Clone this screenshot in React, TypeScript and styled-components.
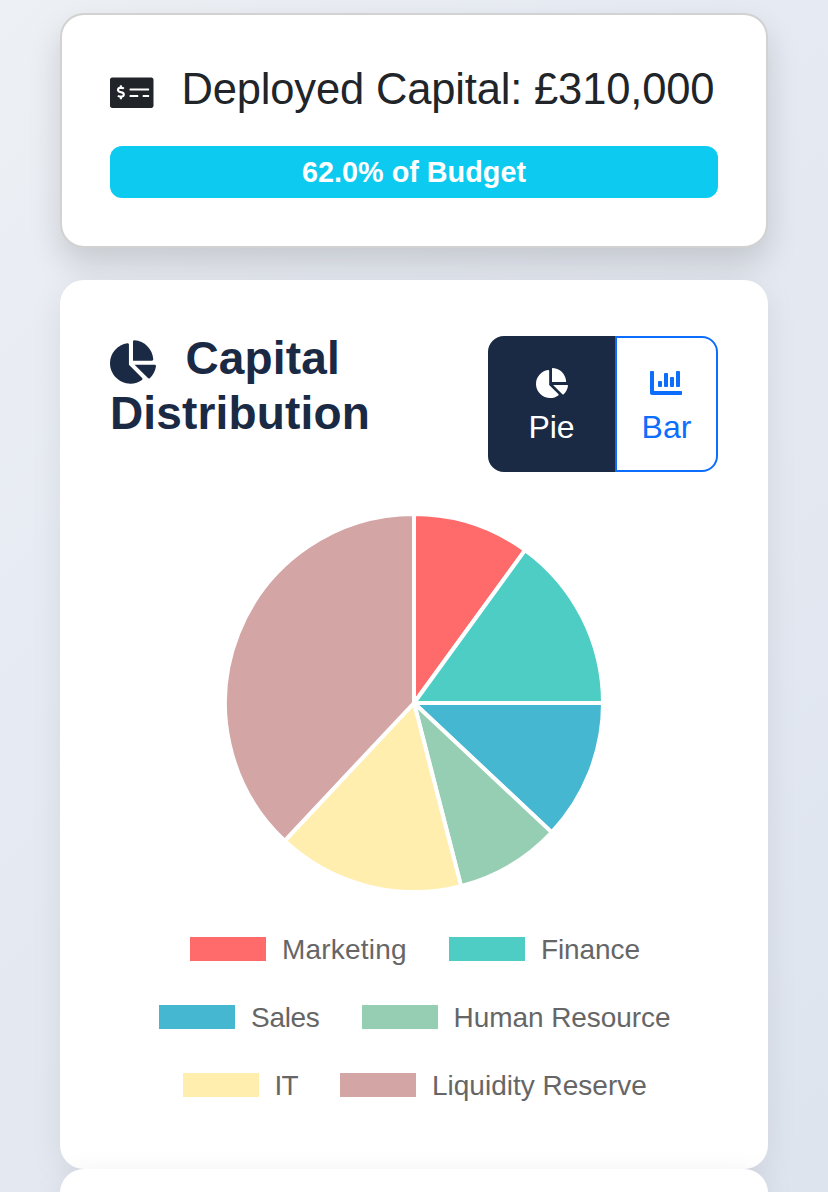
import React from 'react';
import styled, { createGlobalStyle } from 'styled-components';
import { FaMoneyCheckAlt, FaChartPie, FaChartBar } from 'react-icons/fa';

const GlobalStyle = createGlobalStyle`
  *, *::before, *::after { box-sizing: border-box; }
  body {
    margin: 0;
    height: 1192px;
    overflow: hidden;
    font-family: "Liberation Sans", Arial, sans-serif;
    color: #212529;
    background: linear-gradient(135deg, #edf0f4 0%, #e7ebf3 30%, #dee4ee 100%);
  }
`;

const Page = styled.main`
  display: flex;
  flex-direction: column;
  height: 1192px;
  padding: 13px 60px 0;
  overflow: hidden;
`;

const SummaryCard = styled.section`
  flex: none;
  height: 235px;
  margin-bottom: 32px;
  padding: 48px 48px 0;
  background: #fff;
  border: 2px solid rgba(0, 0, 0, 0.175);
  border-radius: 24px;
  box-shadow: 0 16px 32px rgba(0, 0, 0, 0.15);
`;

const SummaryTitle = styled.h2`
  display: flex;
  align-items: center;
  height: 52px;
  margin: 0 0 31px;
  font-size: 43.5px;
  font-weight: 400;
  line-height: 52px;
  letter-spacing: -0.16px;
  white-space: nowrap;

  svg {
    flex: none;
    margin: 8px 28px 0 0;
  }
`;

const ProgressBar = styled.div`
  display: flex;
  align-items: center;
  justify-content: center;
  height: 52px;
  border-radius: 12px;
  background: #0dcaf0;
  color: #fff;
  font-size: 28.8px;
  font-weight: 700;
`;

const ChartCard = styled.section`
  flex: none;
  height: 889px;
  padding: 50px 50px 0;
  background: #fff;
  border-radius: 24px;
  box-shadow: 0 8px 32px rgba(0, 0, 0, 0.08);
`;

const ChartHeader = styled.header`
  display: flex;
  justify-content: space-between;
  align-items: flex-start;
`;

const ChartTitle = styled.h3`
  margin: 1px 0 0;
  color: #1b2a44;
  font-size: 46px;
  font-weight: 700;
  line-height: 55px;
  letter-spacing: 0.15px;

  svg {
    margin-right: 29.5px;
    vertical-align: -11px;
  }
`;

const ToggleGroup = styled.div`
  display: flex;
  width: 230px;
  height: 136px;
  margin-top: 6px;
`;

const ToggleButton = styled.button<{ $active?: boolean }>`
  display: flex;
  flex-direction: column;
  align-items: center;
  width: ${p => (p.$active ? '127px' : '103px')};
  padding: 29px 0 0;
  border: 2px solid ${p => (p.$active ? '#1b2a44' : '#0d6efd')};
  border-radius: ${p => (p.$active ? '16px 0 0 16px' : '0 16px 16px 0')};
  background: ${p => (p.$active ? '#1b2a44' : '#fff')};
  color: ${p => (p.$active ? '#fff' : '#0d6efd')};
  font: 32px/48px "Liberation Sans", Arial, sans-serif;

  svg {
    flex: none;
    margin: 0 ${p => (p.$active ? '0' : '1px')} 4px 0;
  }
`;

const PieChart = styled.svg`
  display: block;
  width: 384px;
  height: 384px;
  margin: 39px auto 0;
`;

const Legend = styled.div`
  display: flex;
  flex-direction: column;
  gap: 40px;
  margin-top: 40px;
  padding-left: 2px;
`;

const LegendRow = styled.div`
  display: flex;
  justify-content: center;
  gap: 42px;
`;

const LegendItem = styled.div`
  display: flex;
  align-items: center;
  gap: 16px;
  height: 28px;
`;

const Swatch = styled.span<{ $color: string }>`
  width: 76px;
  height: 24px;
  background: ${p => p.$color};
`;

const LegendLabel = styled.span<{ $width: number; $tracking: number }>`
  width: ${p => p.$width}px;
  padding-top: 1px;
  color: #666;
  font-size: 28px;
  line-height: 29px;
  letter-spacing: ${p => p.$tracking}px;
  white-space: nowrap;
`;

const slices = [
  { name: 'Marketing', value: 10, color: '#ff6b6b', width: 125, tracking: 0.2 },
  { name: 'Finance', value: 15, color: '#4ecdc4', width: 99, tracking: -0.1 },
  { name: 'Sales', value: 12, color: '#45b7d1', width: 68.5, tracking: -0.3 },
  { name: 'Human Resource', value: 9, color: '#96ceb4', width: 217.5, tracking: -0.06 },
  { name: 'IT', value: 16, color: '#ffeead', width: 23.5, tracking: -0.8 },
  { name: 'Liquidity Reserve', value: 38, color: '#d4a5a5', width: 215.5, tracking: 0 },
];

const pointAt = (percent: number) => {
  const angle = (percent / 100) * Math.PI * 2;
  return `${192 + 189 * Math.sin(angle)} ${192 - 189 * Math.cos(angle)}`;
};

const arcs = slices.map((slice, i) => {
  const start = slices.slice(0, i).reduce((sum, s) => sum + s.value, 0);
  return {
    color: slice.color,
    d: `M192 192L${pointAt(start)}A189 189 0 0 1 ${pointAt(start + slice.value)}Z`,
  };
});

const legendRows = [slices.slice(0, 2), slices.slice(2, 4), slices.slice(4, 6)];

export default function App() {
  return (
    <>
      <GlobalStyle />
      <Page>
        <SummaryCard>
          <SummaryTitle>
            <FaMoneyCheckAlt />
            Deployed Capital: £310,000
          </SummaryTitle>
          <ProgressBar>62.0% of Budget</ProgressBar>
        </SummaryCard>
        <ChartCard>
          <ChartHeader>
            <ChartTitle>
              <FaChartPie />
              Capital
              <br />
              Distribution
            </ChartTitle>
            <ToggleGroup>
              <ToggleButton $active>
                <FaChartPie />
                Pie
              </ToggleButton>
              <ToggleButton>
                <FaChartBar />
                Bar
              </ToggleButton>
            </ToggleGroup>
          </ChartHeader>
          <PieChart viewBox="0 0 384 384">
            {arcs.map(arc => (
              <path key={arc.color} d={arc.d} fill={arc.color} stroke="#fff" strokeWidth="4" strokeLinejoin="bevel" />
            ))}
          </PieChart>
          <Legend>
            {legendRows.map(row => (
              <LegendRow key={row[0].name}>
                {row.map(item => (
                  <LegendItem key={item.name}>
                    <Swatch $color={item.color} />
                    <LegendLabel $width={item.width} $tracking={item.tracking}>
                      {item.name}
                    </LegendLabel>
                  </LegendItem>
                ))}
              </LegendRow>
            ))}
          </Legend>
        </ChartCard>
        <ChartCard />
      </Page>
    </>
  );
}
